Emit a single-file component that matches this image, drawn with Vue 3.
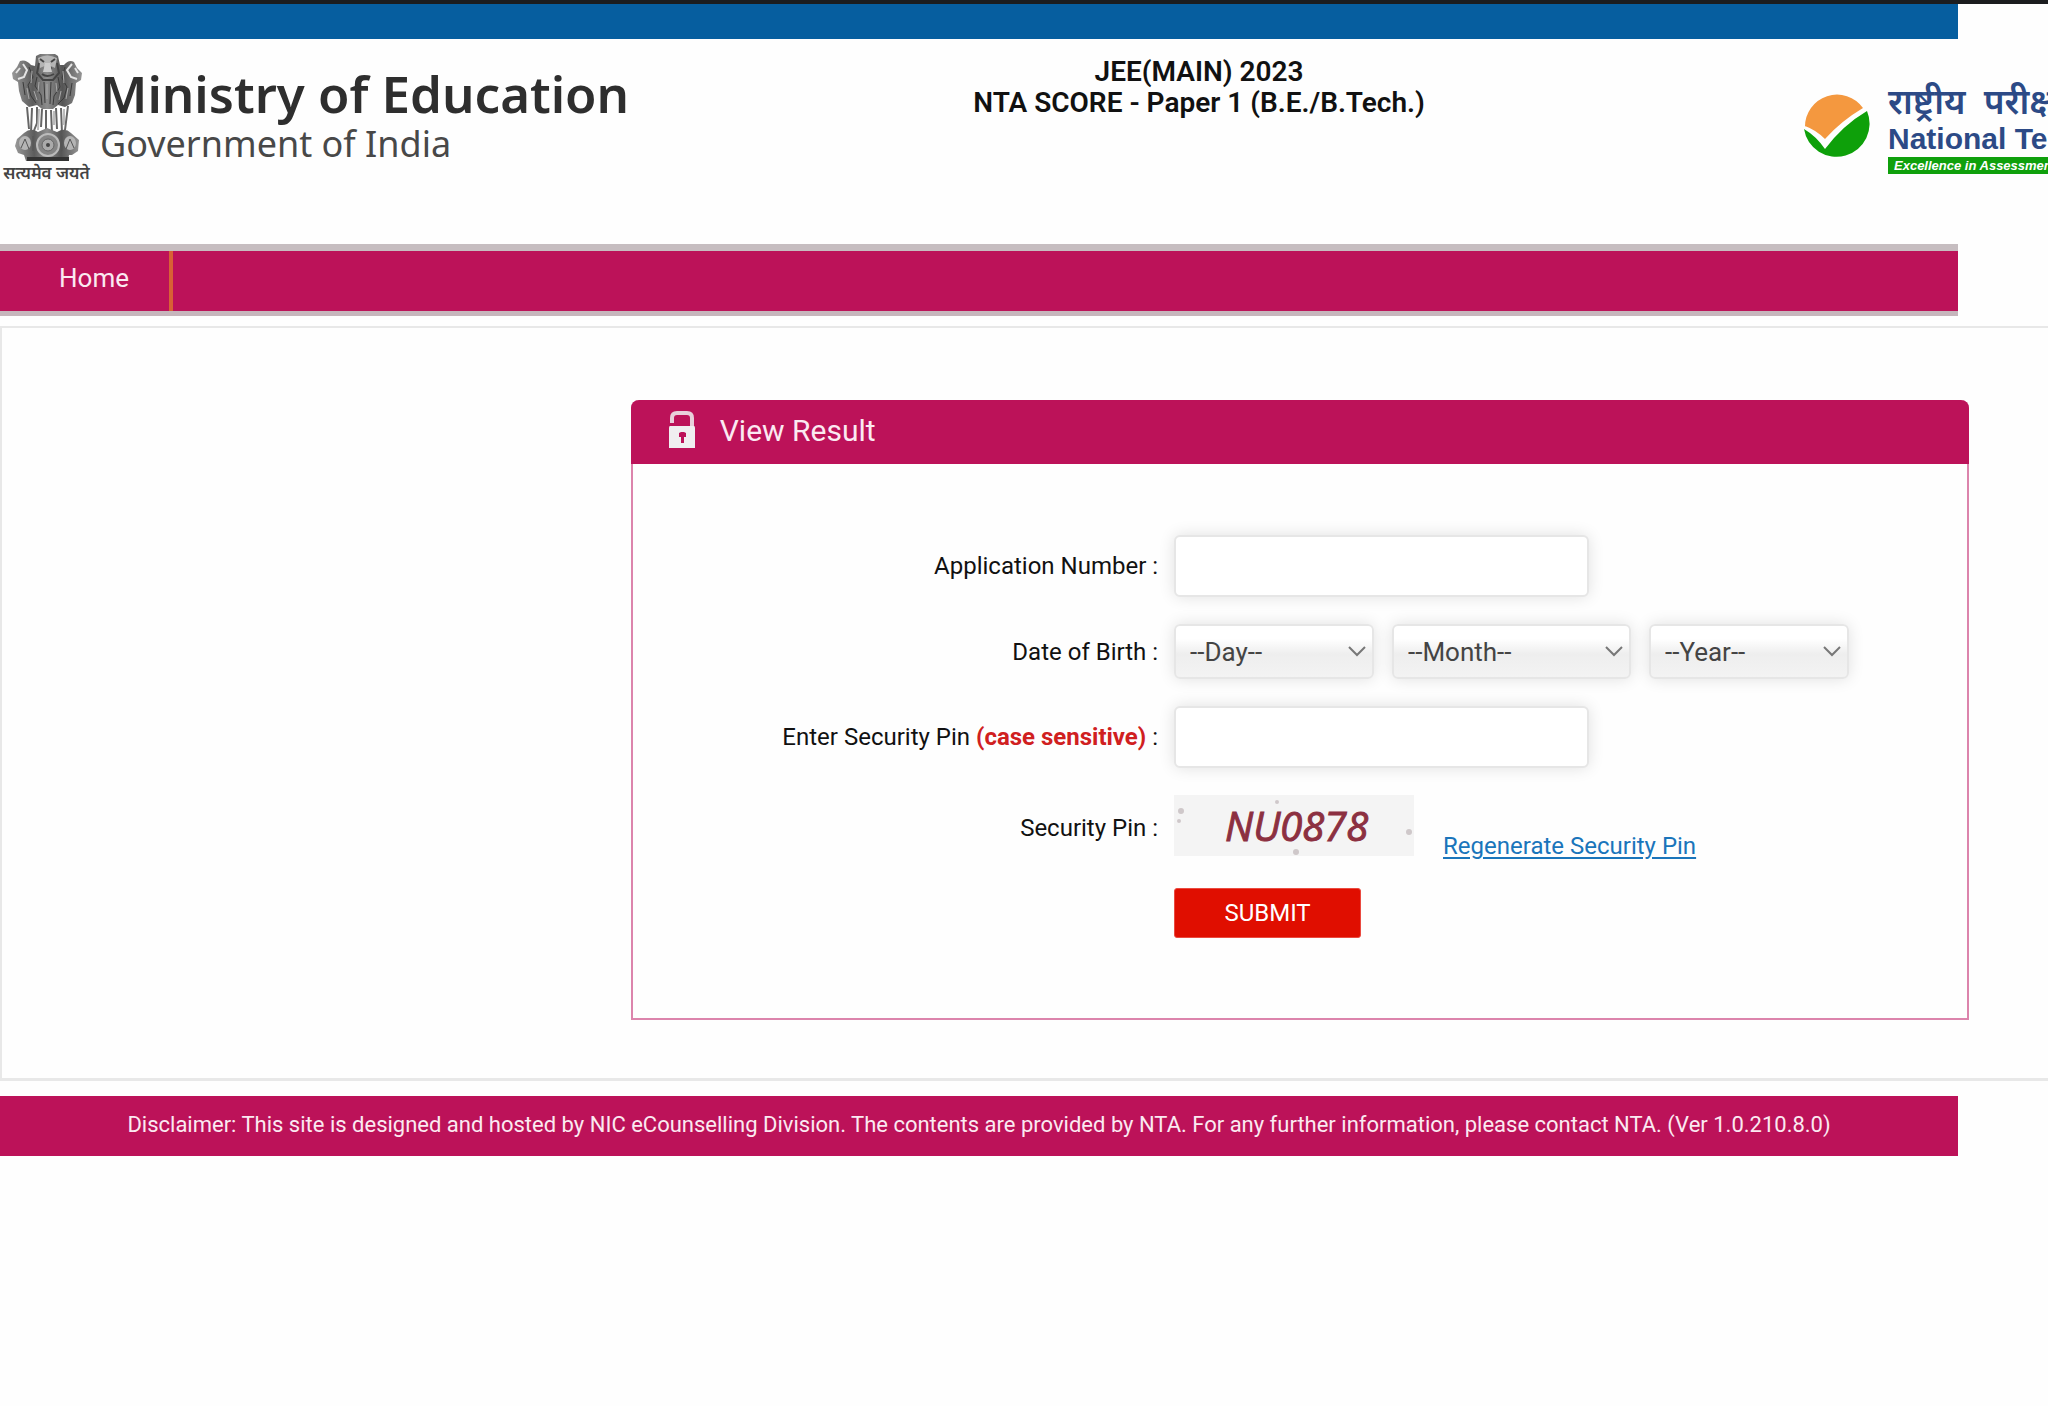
<script setup>
import { ref } from 'vue'

const applicationNumber = ref('')
const securityPin = ref('')
const day = ref('')
const month = ref('')
const year = ref('')

const days = Array.from({ length: 31 }, (_, i) => i + 1)
const months = ['January', 'February', 'March', 'April', 'May', 'June', 'July', 'August', 'September', 'October', 'November', 'December']
const years = Array.from({ length: 40 }, (_, i) => 2010 - i)
</script>

<template>
  <div class="page">
    <div class="edge"></div>
    <div class="topbar"></div>

    <header class="header">
      <div class="brand">
        <div class="emblem">
          <svg width="72" height="110" viewBox="0 0 72 110" aria-hidden="true">
            <defs>
              <linearGradient id="stone" x1="0" y1="0" x2="1" y2="0">
                <stop offset="0" stop-color="#999" />
                <stop offset=".3" stop-color="#5c5c5c" />
                <stop offset=".5" stop-color="#8d8d8d" />
                <stop offset=".72" stop-color="#555" />
                <stop offset="1" stop-color="#959595" />
              </linearGradient>
            </defs>
            <path d="M25 3 L29 1 H44 L47 3 L49 12 L53 12 Q58 6 63 9 L66 15 L71 20 L70 27 L65 30 L64 42 L61 50 L54 54 L47 52 L42 56 H31 L26 52 L18 54 L11 48 L8 38 L7 29 L2 26 L1 20 L6 14 L9 8 Q15 6 20 12 L24 13 Z" fill="url(#stone)" />
            <path d="M27 5 Q36 0 46 5 L44 15 Q37 10 29 15 Z" fill="#b5b5b5" />
            <path d="M29 6 L33 9 M44 6 L40 9 M33 15 L35 16 M41 15 L39 16 M31 21 Q36 25 43 21 M28 10 L26 20 L32 27 H42 L48 20 L46 10" stroke="#444" stroke-width="2" fill="none" />
            <path d="M34 10 H39 L41 19 H32 Z" fill="#ccc" />
            <path d="M12 11 L16 17 L13 24 L7 26 M9 15 L5 20 M61 11 L56 17 L60 24 L66 26 M64 15 L67 20" stroke="#e4e4e4" stroke-width="2" fill="none" />
            <path d="M18 14 L22 24 L17 32 L20 43 L25 50 M26 24 L24 33 L30 42 L31 52 M33 29 L34 50 M40 29 L39 51 M47 24 L49 34 L43 43 L42 52 M54 14 L51 25 L56 34 L53 45 L47 51 M12 29 L14 42 M61 30 L59 43" stroke="#3a3a3a" stroke-width="1" fill="none" />
            <path d="M21 18 L20 30 M28 29 L27 39 M36 31 V46 M45 30 L46 39 M52 18 L53 30 M16 35 L18 46 M57 35 L55 46 M23 38 L26 47 M50 38 L48 47" stroke="#a9a9a9" stroke-width="1" fill="none" />
            <path d="M16 54 L18 76 M21 55 L20 79 M26 54 V70 L22 80 M31 56 L30 74 M35 57 V80 M40 57 L41 80 M45 55 L46 76 M50 55 L51 80 M57 53 L54 77" stroke="#666" stroke-width="2" fill="none" />
            <path d="M28 56 L27 77 M43 58 L43 72 M53 56 L53 72" stroke="#bbb" stroke-width="2" fill="none" />
            <path d="M13 80 Q20 74 27 79 L36 75 L46 79 Q54 74 60 80 L68 87 L67 98 L61 102 H58 L57 108 H15 L13 102 L7 100 L4 93 L6 86 Z" fill="url(#stone)" />
            <ellipse cx="14" cy="90" rx="6" ry="7" fill="#b5b5b5" />
            <ellipse cx="59" cy="90" rx="6" ry="7" fill="#b5b5b5" />
            <path d="M10 95 L14 86 L18 96 M55 96 L59 86 L63 95 M22 83 V98 M51 83 V98" stroke="#555" stroke-width="1" fill="none" />
            <circle cx="37" cy="92" r="11" fill="#858585" stroke="#bbb" stroke-width="2" />
            <circle cx="37" cy="92" r="6" fill="#aaa" stroke="#666" stroke-width="1" />
            <circle cx="37" cy="92" r="2" fill="#444" />
            <path d="M16 104 H58 V108 H16 Z" fill="#333" />
          </svg>
          <span class="motto" lang="hi">सत्यमेव जयते</span>
        </div>
        <div class="brand-text">
          <div class="ministry">Ministry of Education</div>
          <div class="government">Government of India</div>
        </div>
      </div>

      <h1 class="exam">JEE(MAIN) 2023<br />NTA SCORE - Paper 1 (B.E./B.Tech.)</h1>

      <div class="agency">
        <svg class="agency-mark" width="68" height="68" viewBox="0 0 68 68" aria-hidden="true">
          <path d="M2 34 A32 32 0 0 1 60 15 Q38 28 22 46 Q13 37 2 33 Z" fill="#f4983f" />
          <path d="M1 36 Q13 43 22 56 Q40 32 64 18 A33 33 0 1 1 1 36 Z" fill="#0ea00a" />
        </svg>
        <div class="agency-text">
          <div class="agency-hindi" lang="hi">राष्ट्रीय&nbsp; परीक्षा एजेंसी</div>
          <div class="agency-name">National Testing Agency</div>
          <div class="agency-tag">Excellence in Assessment</div>
        </div>
      </div>
    </header>

    <nav class="nav"><a class="nav-link" href="#">Home</a></nav>

    <main class="content">
      <section class="panel">
        <h2 class="panel-head">
          <svg width="28" height="38" viewBox="0 0 28 38" aria-hidden="true">
            <path d="M4 12 V7 Q4 2 9 2 H19 Q24 2 24 7 V16" fill="none" stroke="#e9cfdb" stroke-width="4" />
            <path d="M2 15 H26 Q27 15 27 17 V37 H1 V17 Q1 15 2 15 Z M11 22 V26 H13 V32 H16 V26 H18 V22 L16 21 H13 Z" fill="#f0eef0" fill-rule="evenodd" />
          </svg>
          View Result
        </h2>
        <form class="form" @submit.prevent>
          <label class="label" for="application">Application Number :</label>
          <input id="application" v-model="applicationNumber" class="text-box" type="text" />

          <label class="label" for="day">Date of Birth :</label>
          <div class="date">
            <select id="day" v-model="day" class="short">
              <option value="">--Day--</option>
              <option v-for="d in days" :key="d" :value="d">{{ d }}</option>
            </select>
            <select v-model="month" class="long" aria-label="Month of birth">
              <option value="">--Month--</option>
              <option v-for="m in months" :key="m" :value="m">{{ m }}</option>
            </select>
            <select v-model="year" class="short" aria-label="Year of birth">
              <option value="">--Year--</option>
              <option v-for="y in years" :key="y" :value="y">{{ y }}</option>
            </select>
          </div>

          <label class="label" for="pin">Enter Security Pin <strong>(case sensitive)</strong> :</label>
          <input id="pin" v-model="securityPin" class="text-box" type="text" />

          <span class="label">Security Pin :</span>
          <div class="captcha-row">
            <svg class="captcha" width="240" height="61" viewBox="0 0 240 61" role="img" aria-label="Security pin">
              <rect width="240" height="61" fill="#f4f4f4" />
              <g fill="#cfc8ca">
                <circle cx="7" cy="16" r="3" />
                <circle cx="5" cy="26" r="2" />
                <circle cx="103" cy="7" r="2" />
                <circle cx="122" cy="57" r="3" />
                <circle cx="235" cy="37" r="3" />
              </g>
              <text class="captcha-text" x="51" y="46">NU0878</text>
            </svg>
            <a class="regenerate" href="#">Regenerate Security Pin</a>
          </div>

          <button class="submit" type="submit">SUBMIT</button>
        </form>
      </section>
    </main>

    <footer class="footer">
      Disclaimer: This site is designed and hosted by NIC eCounselling Division. The contents are provided by NTA. For any further information, please contact NTA. (Ver 1.0.210.8.0)
    </footer>
  </div>
</template>

<style>
body {
  background: #fefefe;
}
</style>

<style scoped>
.page {
  overflow: hidden;
  font-family: Roboto, "Liberation Sans", sans-serif;
  color: #111;
}

.page * {
  box-sizing: border-box;
}

.edge {
  height: 4px;
  background: #1b1d1f;
}

.topbar {
  height: 35px;
  margin-right: 90px;
  background: #065e9f;
}

.header {
  display: flex;
  align-items: flex-start;
  height: 205px;
}

.brand {
  display: flex;
  gap: 7px;
  padding-top: 14px;
}

.emblem {
  display: flex;
  flex-direction: column;
  align-items: center;
  width: 93px;
  white-space: nowrap;
}

.motto {
  color: #444;
  font: 600 17px/24px "Noto Sans Devanagari", "Noto Sans", sans-serif;
}

.brand-text {
  padding-top: 11px;
  font-family: "Noto Sans", sans-serif;
  white-space: nowrap;
}

.ministry {
  color: #2e2e2e;
  font-size: 51px;
  font-weight: 600;
  line-height: 58px;
}

.government {
  color: #484848;
  font-size: 36px;
  line-height: 44px;
}

.exam {
  flex: 1;
  margin: 0;
  padding: 17px 34px 0 0;
  color: #111;
  font-size: 28px;
  font-weight: 600;
  line-height: 31px;
  text-align: center;
}

.agency {
  display: flex;
  gap: 17px;
  width: 245px;
  padding-top: 47px;
  overflow: hidden;
  white-space: nowrap;
}

.agency-mark {
  flex: none;
  margin-top: 7px;
}

.agency-text {
  color: #2c4a86;
}

.agency-hindi {
  font: 600 35px/40px "Noto Sans Devanagari", "Noto Sans", sans-serif;
}

.agency-name {
  font: 700 30px/26px "Liberation Sans", sans-serif;
  padding-bottom: 5px;
}

.agency-tag {
  padding-left: 6px;
  background: #0fa00c;
  color: #fff;
  font: italic 700 13px/17px "Liberation Sans", sans-serif;
}

.nav {
  display: flex;
  height: 72px;
  margin-right: 90px;
  border-top: 7px solid #c6bdc0;
  border-bottom: 5px solid #c6b6bc;
  background: #bc1259;
}

.nav-link {
  padding: 0 40px 0 59px;
  border-right: 4px solid #d86135;
  color: #fbe9f1;
  font-size: 26px;
  line-height: 54px;
  text-decoration: none;
}

.content {
  margin-top: 10px;
  padding: 72px 79px 58px 30.7%;
  border: solid #e8e8e8;
  border-width: 2px 0 3px 2px;
}

.panel {
  border: 2px solid #dc84ac;
  border-top: 0;
  border-radius: 8px 8px 0 0;
}

.panel-head {
  display: flex;
  align-items: center;
  gap: 24px;
  height: 64px;
  margin: 0 -2px;
  padding: 0 37px 4px;
  border-radius: 8px 8px 0 0;
  background: #bc1259;
  color: #fbe9f1;
  font-size: 30px;
  font-weight: 400;
}

.form {
  display: grid;
  grid-template-columns: 2fr 3fr;
  column-gap: 16px;
  align-items: center;
  padding: 71px 5px 80px 0;
}

.label {
  font-size: 24px;
  line-height: 30px;
  text-align: right;
}

.label strong {
  color: #d0201f;
  font-weight: 700;
}

.text-box,
select {
  border: 2px solid #e6e6e6;
  border-radius: 6px;
  box-shadow: 0 0 16px rgba(0, 0, 0, 0.12);
  color: #444;
  font-family: inherit;
  font-size: 26px;
}

.text-box {
  width: 415px;
  height: 62px;
  padding: 0 14px;
  background: #fff;
}

.date {
  display: flex;
  gap: 18px;
  padding: 27px 0;
}

select {
  height: 55px;
  padding: 0 14px;
  appearance: none;
  background:
    url("data:image/svg+xml,%3Csvg xmlns='http://www.w3.org/2000/svg' width='18' height='12' viewBox='0 0 18 12'%3E%3Cpath d='M1 1l8 8 8-8' fill='none' stroke='%23777' stroke-width='2'/%3E%3C/svg%3E") no-repeat right 6px center,
    linear-gradient(#fff 25%, #eee 55%, #f3f3f3);
}

.short {
  width: 200px;
}

.long {
  width: 239px;
}

.captcha-row {
  display: flex;
  align-items: flex-end;
  gap: 29px;
  padding: 27px 0 32px;
}

.captcha-text {
  fill: #8c3041;
  stroke: #8c3041;
  stroke-width: 1px;
  font: italic 400 40px "Open Sans", sans-serif;
}

.regenerate {
  color: #1a75bb;
  font-size: 24px;
  line-height: 20px;
  text-underline-offset: 3px;
}

.submit {
  grid-column: 2;
  width: 187px;
  height: 50px;
  border: 1px solid #ea4a40;
  border-radius: 3px;
  background: #e00e00;
  color: #fff;
  font: 24px Roboto, sans-serif;
}

.footer {
  margin: 15px 90px 0 0;
  padding: 14px 0 16px;
  background: #bc1259;
  color: #fbe9f1;
  font-size: 22px;
  line-height: 30px;
  text-align: center;
}
</style>
